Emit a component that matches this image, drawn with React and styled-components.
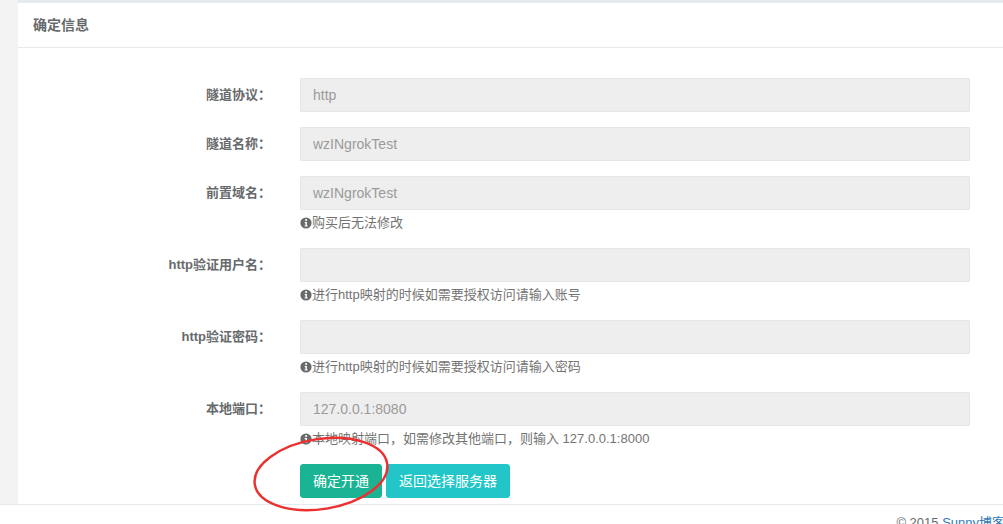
import React from 'react';
import styled, { createGlobalStyle } from 'styled-components';

const GlobalStyle = createGlobalStyle`
  html, body {
    margin: 0;
    padding: 0;
    background: #f3f3f4;
    overflow: hidden;
  }
  body {
    font-family: "Liberation Sans", "Noto Sans CJK SC", sans-serif;
    font-size: 13px;
    color: #676a6c;
  }
  * {
    box-sizing: border-box;
  }
`;

const fields = [
  { label: '隧道协议：', value: 'http' },
  { label: '隧道名称：', value: 'wzINgrokTest' },
  { label: '前置域名：', value: 'wzINgrokTest', help: '购买后无法修改' },
  { label: 'http验证用户名：', value: '', help: '进行http映射的时候如需要授权访问请输入账号' },
  { label: 'http验证密码：', value: '', help: '进行http映射的时候如需要授权访问请输入密码' },
  { label: '本地端口：', value: '127.0.0.1:8080', help: '本地映射端口，如需修改其他端口，则输入 127.0.0.1:8000' },
];

function InfoIcon() {
  return (
    <svg width="12" height="12" viewBox="0 0 12 12">
      <circle cx="6" cy="6" r="5.6" fill="#676a6c" />
      <circle cx="6.1" cy="3.1" r="1.05" fill="#fff" />
      <path d="M4.6 5h2.3v3.6h0.8v1h-3.1v-1h0.8v-2.6h-0.8z" fill="#fff" />
    </svg>
  );
}

export default function App() {
  return (
    <Page>
      <GlobalStyle />
      <Main>
        <Card>
          <CardHeader>
            <Title>确定信息</Title>
          </CardHeader>
          <CardBody>
            {fields.map((f) => (
              <FormRow key={f.label}>
                <Label>{f.label}</Label>
                <Field>
                  <Input value={f.value} disabled readOnly />
                  {f.help && (
                    <Help>
                      <InfoIcon />
                      {f.help}
                    </Help>
                  )}
                </Field>
              </FormRow>
            ))}
            <FormRow>
              <span />
              <ButtonRow>
                <Button $color="#1ab394">确定开通</Button>
                <Button $color="#23c6c8">返回选择服务器</Button>
                <Annotation width="150" height="90" viewBox="0 0 150 90">
                  <ellipse
                    cx="75"
                    cy="45"
                    rx="67"
                    ry="35"
                    transform="rotate(-9 75 45)"
                    fill="none"
                    stroke="#ec2f2f"
                    strokeWidth="2.4"
                  />
                </Annotation>
              </ButtonRow>
            </FormRow>
          </CardBody>
        </Card>
      </Main>
      <Footer>
        <FooterText>
          © 2015 <FooterLink>Sunny博客</FooterLink>
        </FooterText>
      </Footer>
    </Page>
  );
}

const Page = styled.div`
  display: flex;
  flex-direction: column;
  width: 100%;
`;

const Main = styled.div`
  padding-left: 18px;
`;

const Card = styled.div`
  background: #fff;
  border-top: 3px solid #e7eaec;
`;

const CardHeader = styled.div`
  height: 45px;
  padding: 0 15px 3px;
  display: flex;
  align-items: center;
  border-bottom: 1px solid #e7eaec;
`;

const Title = styled.h5`
  margin: 0;
  font-size: 14px;
  font-weight: 700;
  color: #676a6c;
`;

const CardBody = styled.div`
  padding: 30px 33px 6px 20px;
`;

const FormRow = styled.div`
  display: grid;
  grid-template-columns: 233px 1fr;
  column-gap: 29px;
  margin-bottom: 15px;

  &:last-child {
    margin-bottom: 0;
  }
`;

const Label = styled.label`
  text-align: right;
  line-height: 34px;
  font-size: 13px;
  font-weight: 700;
  color: #676a6c;
  white-space: nowrap;
`;

const Field = styled.div`
  display: flex;
  flex-direction: column;
`;

const Input = styled.input`
  height: 34px;
  width: 100%;
  padding: 6px 12px;
  background: #eeeeee;
  border: 1px solid #e5e6e7;
  border-radius: 1px;
  font-family: "Liberation Sans", "Noto Sans CJK SC", sans-serif;
  font-size: 14px;
  color: #9a9a9a;
  outline: none;
`;

const Help = styled.span`
  display: flex;
  align-items: center;
  margin: 4px 0 1px;
  line-height: 18px;
  font-size: 13px;
  color: #737373;

  svg {
    flex-shrink: 0;
  }
`;

const ButtonRow = styled.div`
  position: relative;
  display: flex;
  gap: 4px;
`;

const Button = styled.button`
  height: 34px;
  padding: 6px 12px;
  border: 1px solid ${(p) => p.$color};
  border-radius: 3px;
  background: ${(p) => p.$color};
  color: #fff;
  font-family: "Liberation Sans", "Noto Sans CJK SC", sans-serif;
  font-size: 14px;
  line-height: 20px;
  cursor: pointer;
`;

const Annotation = styled.svg`
  position: absolute;
  left: -54px;
  top: -35px;
  pointer-events: none;
`;

const Footer = styled.div`
  background: #fff;
  border-top: 1px solid #e7eaec;
  padding: 9px 20px 10px;
  display: flex;
  justify-content: flex-end;
`;

const FooterText = styled.span`
  font-size: 13px;
  line-height: 18px;
  color: #676a6c;
  margin-right: -22px;
  white-space: nowrap;
`;

const FooterLink = styled.a`
  color: #337ab7;
  text-decoration: none;
`;
